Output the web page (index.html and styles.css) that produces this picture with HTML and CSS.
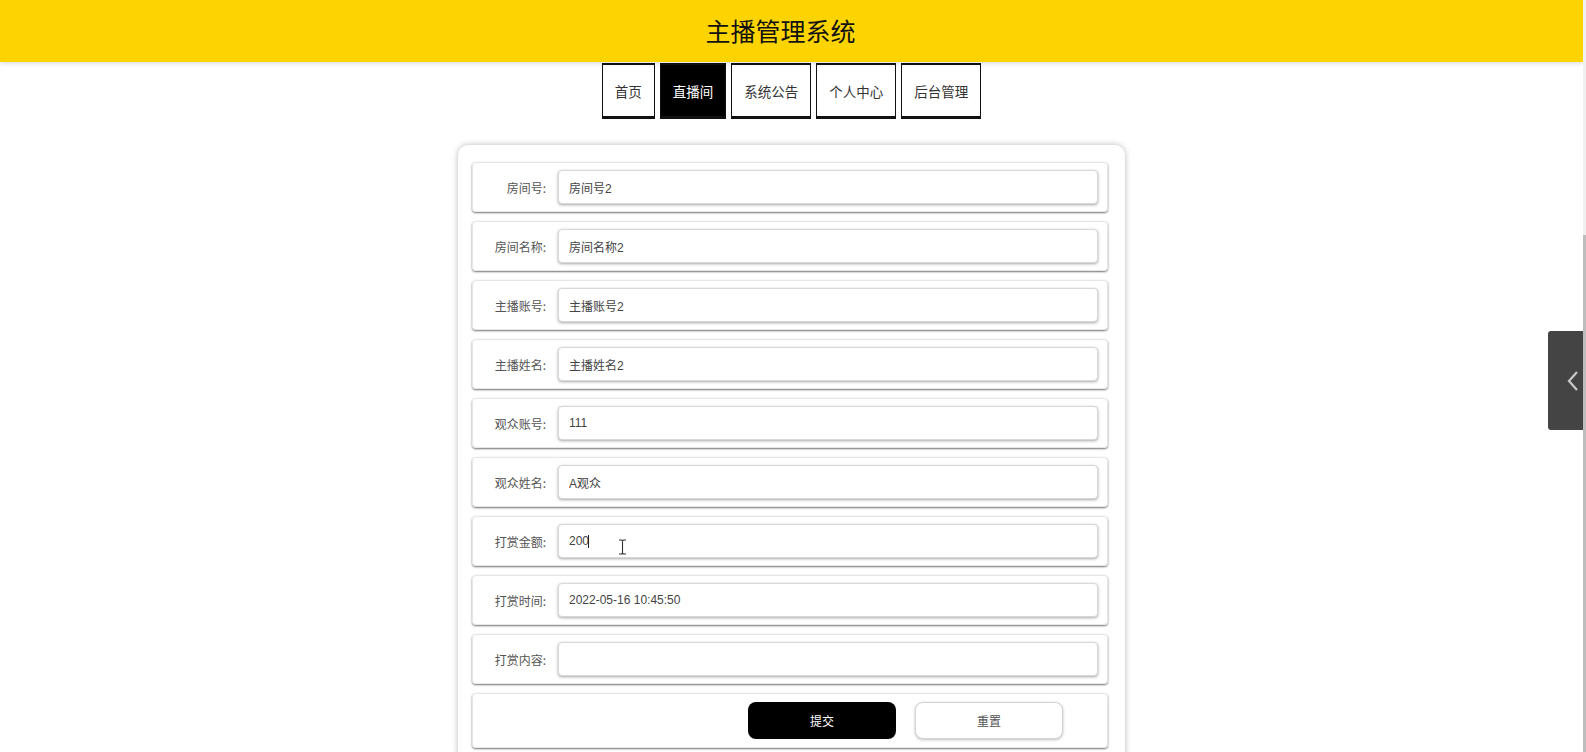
FILE: index.html
```html
<!DOCTYPE html>
<html lang="zh-CN">
<head>
  <meta charset="UTF-8">
  <meta name="viewport" content="width=device-width, initial-scale=1.0">
  <title>主播管理系统</title>
  <link rel="stylesheet" href="styles.css">
</head>
<body>
  <div class="header">
    <h1>主播管理系统</h1>
  </div>

  <div class="nav">
    <a class="nav-item" href="#">首页</a>
    <a class="nav-item active" href="#">直播间</a>
    <a class="nav-item" href="#">系统公告</a>
    <a class="nav-item" href="#">个人中心</a>
    <a class="nav-item" href="#">后台管理</a>
  </div>

  <div class="container">
    <form class="form-card" id="rewardForm">
      <div class="form-row">
        <label for="roomNo">房间号:</label>
        <input type="text" id="roomNo" value="房间号2">
      </div>
      <div class="form-row">
        <label for="roomName">房间名称:</label>
        <input type="text" id="roomName" value="房间名称2">
      </div>
      <div class="form-row">
        <label for="anchorAccount">主播账号:</label>
        <input type="text" id="anchorAccount" value="主播账号2">
      </div>
      <div class="form-row">
        <label for="anchorName">主播姓名:</label>
        <input type="text" id="anchorName" value="主播姓名2">
      </div>
      <div class="form-row">
        <label for="viewerAccount">观众账号:</label>
        <input type="text" id="viewerAccount" value="111">
      </div>
      <div class="form-row">
        <label for="viewerName">观众姓名:</label>
        <input type="text" id="viewerName" value="A观众">
      </div>
      <div class="form-row">
        <label for="amount">打赏金额:</label>
        <div class="input-wrap">
          <input type="text" id="amount" value="200">
          <span class="caret"></span>
          <svg class="ibeam" width="9" height="16" viewBox="0 0 9 16">
            <path d="M1 1 H3.5 M5.5 1 H8 M4.5 1.5 V14.5 M1 15 H3.5 M5.5 15 H8 M3.5 1 L4.5 1.8 L5.5 1 M3.5 15 L4.5 14.2 L5.5 15" fill="none" stroke="#333" stroke-width="1.1"/>
          </svg>
        </div>
      </div>
      <div class="form-row">
        <label for="rewardTime">打赏时间:</label>
        <input type="text" id="rewardTime" value="2022-05-16 10:45:50">
      </div>
      <div class="form-row">
        <label for="content">打赏内容:</label>
        <input type="text" id="content" value="">
      </div>
      <div class="form-row button-row">
        <button type="submit" class="btn-submit">提交</button>
        <button type="reset" class="btn-reset">重置</button>
      </div>
    </form>
  </div>

  <div class="side-tab">
    <svg width="12" height="22" viewBox="0 0 12 22"><path d="M10 2 L2 11 L10 20" fill="none" stroke="#c8c8c8" stroke-width="2.2"/></svg>
  </div>

  <div class="scrollbar"><div class="thumb"></div></div>
</body>
</html>
```

FILE: styles.css
```css
html {
  overflow: hidden;
}
body {
  margin: 0;
  padding-right: 3px;
  font-family: "Liberation Sans", "Noto Sans CJK SC", sans-serif;
  background: #fff;
  color: #333;
}
.header {
  height: 62px;
  background-color: #fed400;
  box-shadow: 0 2px 4px rgba(0, 0, 0, 0.12);
  display: flex;
  align-items: center;
  justify-content: center;
  padding-right: 22px;
  padding-bottom: 3px;
  box-sizing: border-box;
  position: relative;
  z-index: 1;
}
.header h1 {
  margin: 0;
  font-size: 25px;
  font-weight: normal;
  color: #111;
  font-family: "Noto Sans CJK SC", sans-serif;
}
.nav {
  display: flex;
  justify-content: center;
  gap: 5px;
  margin-top: 1px;
}
.nav-item {
  display: flex;
  align-items: center;
  height: 51px;
  padding: 0 12px;
  border: 1px solid #111;
  border-top-width: 2px;
  border-bottom-width: 3px;
  color: #333;
  font-size: 13.5px;
  text-decoration: none;
  font-family: "Noto Sans CJK SC", sans-serif;
  background: #fff;
}
.nav-item.active {
  background: #000;
  color: #fff;
}
.container {
  display: flex;
  justify-content: center;
  padding-top: 26px;
}
.form-card {
  width: 636px;
  padding: 17px 17px 17px 14px;
  border-radius: 10px;
  box-shadow: 0 0 6px rgba(0, 0, 0, 0.28);
  display: flex;
  flex-direction: column;
  gap: 9px;
  background: #fff;
}
.form-row {
  height: 50px;
  display: flex;
  align-items: center;
  border: 1px solid #e6e6e6;
  border-radius: 4px;
  box-shadow: 0 1px 2px rgba(0, 0, 0, 0.55);
  box-sizing: border-box;
}
.form-row label {
  width: 73px;
  padding-right: 12px;
  text-align: right;
  font-size: 12px;
  color: #555;
  font-family: "Noto Sans CJK SC", sans-serif;
  flex-shrink: 0;
}
.form-row input,
.input-wrap {
  width: 540px;
  height: 34px;
  box-sizing: border-box;
}
.form-row input {
  padding: 0 10px;
  border: 1px solid #d8d8d8;
  border-radius: 4px;
  box-shadow: 0 1px 3px rgba(0, 0, 0, 0.35);
  font-size: 12px;
  color: #444;
  font-family: "Liberation Sans", "Noto Sans CJK SC", sans-serif;
  outline: none;
  background: #fff;
}
.input-wrap {
  position: relative;
}
.caret {
  position: absolute;
  left: 30px;
  top: 11px;
  width: 1px;
  height: 13px;
  background: #222;
}
.ibeam {
  position: absolute;
  left: 60px;
  top: 15px;
}
.button-row {
  height: 55px;
  padding-left: 275px;
  gap: 19px;
}
.button-row button {
  width: 148px;
  height: 37px;
  border-radius: 8px;
  font-size: 12px;
  font-family: "Noto Sans CJK SC", sans-serif;
  cursor: pointer;
}
.btn-submit {
  background: #000;
  color: #fff;
  border: none;
}
.btn-reset {
  width: 150px;
  background: #fff;
  color: #555;
  border: 1px solid #d4d4d4;
  box-shadow: 0 1px 3px rgba(0, 0, 0, 0.25);
}
.side-tab {
  position: fixed;
  right: 1px;
  top: 331px;
  width: 37px;
  height: 99px;
  background: #444;
  border-radius: 3px 0 0 3px;
  display: flex;
  align-items: center;
  justify-content: center;
  padding-left: 12px;
  box-sizing: border-box;
  z-index: 5;
}
.scrollbar {
  position: fixed;
  right: 0;
  top: 0;
  width: 3px;
  height: 100%;
  background: #f0f0f0;
  z-index: 6;
}
.thumb {
  margin-top: 235px;
  height: 517px;
  background: #bdbdbd;
}
```
